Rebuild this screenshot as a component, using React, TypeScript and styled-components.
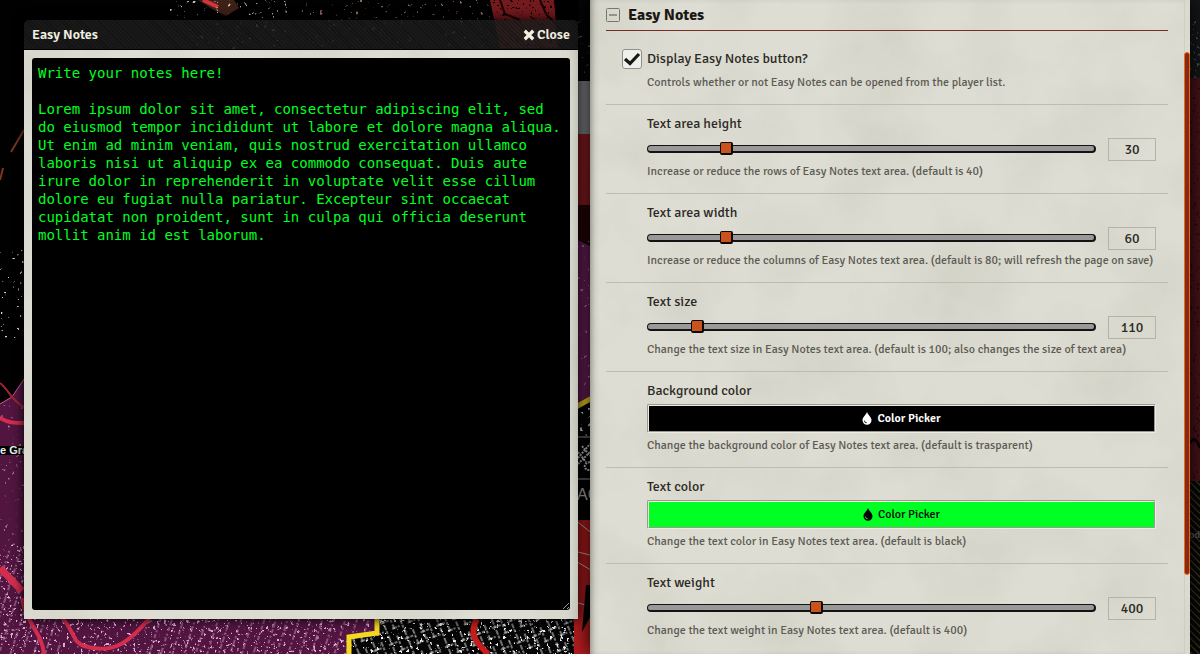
import React, { useState } from "react";
import styled, { createGlobalStyle } from "styled-components";

const GlobalStyle = createGlobalStyle`
  *, *::before, *::after { box-sizing: border-box; }
  html, body { margin: 0; background: #000; }
  body {
    font-family: Signika, "Open Sans", "Noto Sans", sans-serif;
    font-size: 14px;
    font-weight: 400;
    color: #191813;
  }
`;

const Desktop = styled.main`
  position: relative;
  display: grid;
  grid-template-columns: minmax(0, 554fr) minmax(0, 600fr);
  column-gap: 12px;
  align-items: start;
  min-height: 100vh;
  padding: 0 10px 0 24px;
  overflow: hidden;
`;

const MapCanvas = styled.svg`
  position: absolute;
  inset: 0;
  width: 100%;
  height: 100%;
`;

const PaperCanvas = styled.svg`
  position: absolute;
  inset: 0;
  width: 100%;
  height: 100%;
`;

const NotesWindow = styled.section`
  position: relative;
  margin-top: 20px;
  border-radius: 5px 5px 0 0;
  box-shadow: 0 0 12px #000;
`;

const TitleBar = styled.header`
  display: flex;
  align-items: center;
  justify-content: space-between;
  height: 30px;
  padding: 0 8px;
  border-bottom: 1px solid #000;
  border-radius: 5px 5px 0 0;
  background:
    repeating-linear-gradient(45deg, #0004 0 1px, transparent 1px 3px),
    rgba(29, 29, 29, 0.86);
  color: #f0f0e0;
`;

const WindowTitle = styled.h1`
  margin: 0;
  font-size: 14px;
  line-height: 20px;
  font-weight: 600;
`;

const CloseButton = styled.button`
  display: flex;
  align-items: center;
  gap: 2px;
  padding: 0;
  border: 0;
  background: none;
  color: inherit;
  font: inherit;
  line-height: 20px;
  font-weight: 600;
  cursor: pointer;
`;

const WindowBody = styled.div`
  position: relative;
  padding: 8px 8px 9px;
  background: #dad9cd;
`;

const NotesArea = styled.textarea`
  position: relative;
  display: block;
  width: 100%;
  padding: 6px;
  border: 0;
  border-radius: 3px;
  outline: 0;
  background: #000;
  color: #00ff22;
  font-family: Consolas, "DejaVu Sans Mono", monospace;
  font-size: 14px;
  line-height: 18px;
  resize: both;
`;

const SettingsPanel = styled.section`
  position: relative;
  display: flex;
  min-height: 100vh;
  background: #dad9cd;
  box-shadow: 0 0 20px #000;
`;

const SettingsList = styled.form`
  position: relative;
  flex: 1;
  min-width: 0;
  padding: 0 16px;
  box-shadow: inset 6px 0 8px -6px #66665a;
`;

const SectionHeader = styled.h2`
  display: flex;
  align-items: center;
  gap: 8px;
  height: 31px;
  margin: 0;
  border-bottom: 1px solid #782e22;
  font-size: 16px;
  line-height: 32px;
  font-weight: 700;
`;

const Setting = styled.div<{ $first?: boolean; $last?: boolean }>`
  padding: ${(p) => (p.$first ? 18 : 9)}px 12px 12px 41px;
  border-bottom: ${(p) => (p.$last ? "0" : "1px solid #bdbcb0")};
`;

const Label = styled.label`
  display: block;
  line-height: 20px;
  color: #2b2a25;
`;

const Hint = styled.p`
  margin: 2px 0 0;
  font-size: 12px;
  line-height: 18px;
  color: #5c5b54;
  white-space: nowrap;
`;

const CheckRow = styled.div`
  display: flex;
  align-items: center;
  gap: 5px;
  margin: 0 0 5px -25px;
`;

const CheckBoxFrame = styled.span`
  display: grid;
  width: 20px;
  height: 20px;

  > * { grid-area: 1 / 1; }
  > svg { position: relative; pointer-events: none; }
`;

const CheckBox = styled.input`
  appearance: none;
  width: 20px;
  height: 20px;
  margin: 0;
  border: 1px solid #918f8c;
  border-radius: 3px;
  background: #efefec;

  &:not(:checked) + svg { visibility: hidden; }
`;

const SliderRow = styled.div`
  display: flex;
  align-items: center;
  gap: 12px;
  height: 24px;
  margin-top: 3px;
`;

const Slider = styled.input`
  appearance: none;
  flex: 1;
  min-width: 0;
  height: 8px;
  margin: 0;
  border: solid #131311;
  border-width: 1px 2px 2px 1px;
  border-radius: 4px;
  background: #999;

  &::-webkit-slider-thumb {
    appearance: none;
    width: 13px;
    height: 13px;
    border: solid #0c0a08;
    border-width: 1px 2px 2px 1px;
    border-radius: 2px;
    background: #c9531a;
  }
`;

const ValueBox = styled.input`
  width: 48px;
  height: 23px;
  padding: 0;
  border: 1px solid #b5b3a4;
  background: none;
  color: #2b2a25;
  font: inherit;
  text-align: center;
`;

const PickerButton = styled.button<{ $fill: string; $ink: string; $strong?: boolean }>`
  display: flex;
  align-items: center;
  justify-content: center;
  gap: 5px;
  width: 100%;
  height: 29px;
  margin: 3px 0 4px;
  padding: 0;
  border: 2px groove #eeede0;
  border-radius: 2px;
  background: ${(p) => p.$fill};
  color: ${(p) => p.$ink};
  font: inherit;
  font-size: 12px;
  font-weight: ${(p) => (p.$strong ? 600 : 400)};
  cursor: pointer;
`;

const ScrollTrack = styled.div`
  position: relative;
  width: 6px;
  padding-top: 52px;
  border-left: 1px solid #cfcec2;
`;

const ScrollThumb = styled.div`
  width: 6px;
  height: 80vh;
  margin-left: -1px;
  border: 1px solid #ff6400;
  border-radius: 3px;
  background: #782e22;
`;

const Paper = ({ id }: { id: string }) => (
  <PaperCanvas aria-hidden="true">
    <filter id={id} x="0" y="0" width="100%" height="100%">
      <feTurbulence type="fractalNoise" baseFrequency="0.012" numOctaves={6} seed={4} />
      <feColorMatrix values="0 0 0 0 0.45  0 0 0 0 0.45  0 0 0 0 0.38  0.9 0 0 0 -0.34" />
    </filter>
    <rect width="100%" height="100%" fill="#deddd3" />
    <rect width="100%" height="100%" filter={`url(#${id})`} opacity="0.5" />
  </PaperCanvas>
);

const Speckle = ({ id, freq, seed, cut }: { id: string; freq: string; seed: number; cut: number }) => (
  <filter id={id} x="0" y="0" width="100%" height="100%">
    <feTurbulence type="fractalNoise" baseFrequency={freq} numOctaves={3} seed={seed} result="n" />
    <feColorMatrix in="n" values={`0 0 0 0 1  0 0 0 0 1  0 0 0 0 1  14 0 0 0 ${cut}`} result="m" />
    <feComposite in="SourceGraphic" in2="m" operator="in" />
  </filter>
);

const CityMap = () => (
  <MapCanvas viewBox="0 0 1200 654" preserveAspectRatio="none" aria-hidden="true">
    <defs>
      <Speckle id="fine" freq="0.3" seed={3} cut={-9.2} />
      <Speckle id="sparse" freq="0.25" seed={9} cut={-9.8} />
      <pattern id="streets" width="17" height="23" patternUnits="userSpaceOnUse" patternTransform="rotate(-22)">
        <path d="M3 0V23M11 2V19M0 8H9M9 17H17" stroke="#ddd" strokeWidth="1" strokeDasharray="5 1 3 2" fill="none" />
      </pattern>
      <pattern id="lanes" width="11" height="30" patternUnits="userSpaceOnUse" patternTransform="rotate(18)">
        <path d="M3 0V30" stroke="#c78dba" strokeWidth="1" strokeDasharray="2 2 4 3" />
      </pattern>
      <pattern id="stripes" width="5" height="5" patternUnits="userSpaceOnUse" patternTransform="rotate(-45)">
        <path d="M0 0V5" stroke="#45411c" strokeWidth="2" />
      </pattern>
    </defs>
    <rect width="1200" height="654" fill="#020101" />

    {/* northern coast */}
    <path d="M198 0H234L239 8L226 16L212 9Z" fill="#3d2016" />
    <path d="M203 0L218 7" stroke="#d8333c" strokeWidth="4" />
    <path d="M490 0H554L558 48H500Z" fill="#74191d" />
    <path d="M500 0L505 14L520 20M540 0L546 14L556 24" stroke="#180405" strokeWidth="2" fill="none" />
    <path d="M162 0H290V56H200Z" fill="#bdbdbd" filter="url(#sparse)" />
    <rect x="300" width="190" height="50" fill="#8d6a62" filter="url(#sparse)" />
    <rect x="480" width="100" height="50" fill="#000" filter="url(#fine)" />
    <path d="M24 130L11 152M3 168L0 180" stroke="#7d3421" strokeWidth="2" />
    <rect y="250" width="24" height="90" fill="#d5d5d5" filter="url(#sparse)" />

    {/* southern district */}
    <path d="M0 404L12 397L24 379L60 360H590V654H0Z" fill="#511540" />
    <path d="M0 404L12 397L24 379" stroke="#d855a8" fill="none" />
    <rect y="405" width="380" height="249" fill="#a56d98" filter="url(#sparse)" />
    <rect y="545" width="380" height="109" fill="#e3afd7" filter="url(#fine)" />
    <rect x="145" y="612" width="230" height="42" fill="url(#lanes)" />
    <rect y="550" width="60" height="104" fill="url(#lanes)" />
    <g stroke="#d42d4e" fill="none">
      <path d="M0 383C8 388 10 400 24 407" strokeWidth="2" stroke="#9c2530" />
      <path d="M0 418C8 423 15 423 24 423" strokeWidth="4" />
      <path d="M0 568L22 591" strokeWidth="7" />
      <path d="M22 598C26 624 42 632 44 654" strokeWidth="4" />
      <path d="M60 615C76 633 72 642 84 646C114 655 130 642 152 615" strokeWidth="4" />
    </g>
    <path d="M380 610L376 633L349 636V654H590V610Z" fill="#050505" />
    <path d="M380 610H590V654H350V637L376 634Z" fill="url(#streets)" />
    <path d="M380 610H590V654H350V637L376 634Z" fill="#eee" filter="url(#fine)" />
    <path d="M377 615V633L349 637V654" stroke="#f3d723" strokeWidth="5" fill="none" />
    <path d="M477 619C467 636 480 646 488 654" stroke="#c51d1b" strokeWidth="6" fill="none" />
    <rect y="446" width="40" height="9" fill="#000" />
    <text x="0" y="454" fill="#eee" fontFamily="Liberation Sans, sans-serif" fontWeight="700" fontSize="11">e Gra</text>

    {/* channel between the windows */}
    <rect x="578" width="12" height="80" fill="#050505" />
    <rect x="578" y="20" width="12" height="60" fill="#777" filter="url(#sparse)" />
    <rect x="574" y="81" width="20" height="53" fill="#85858a" />
    <rect x="574" y="134" width="20" height="74" fill="#8c1c22" />
    <path d="M574 205H594V246L574 238Z" fill="#250507" />
    <path d="M574 238L594 248V404H574Z" fill="#6b1f59" />
    <rect x="574" y="240" width="20" height="155" fill="#b37ca7" filter="url(#sparse)" />
    <path d="M574 408L594 397V520H574Z" fill="#040404" />
    <path d="M574 408L594 397" stroke="#f3d723" strokeWidth="5" />
    <rect x="574" y="408" width="20" height="30" fill="#ddd" filter="url(#sparse)" />
    <path d="M574 437H594M574 479H594" stroke="#aaa" />
    <path d="M578 458L590 444M578 464L590 452M578 452L586 462M582 446L590 456M590 462C582 463 584 471 590 470" stroke="#ccc" strokeWidth="2" fill="none" strokeDasharray="2 1" />
    <text x="577" y="500" fill="#bbb" fontFamily="Liberation Sans, sans-serif" fontSize="16">AC</text>
    <path d="M574 520H594V654H574Z" fill="#b51c1e" />
    <path d="M574 519L594 535M574 551L594 556M574 560L594 572M574 602L594 607" stroke="#ccbaba" strokeWidth="1" />
    <path d="M586 585H594V610L582 632Z" fill="#050505" />

    {/* dimmed edge behind the settings */}
    <rect x="1180" width="20" height="82" fill="#151617" />
    <rect x="1180" y="20" width="20" height="60" fill="#555658" filter="url(#fine)" />
    <rect x="1180" y="78" width="20" height="404" fill="#4a1318" />
    <rect x="1180" y="78" width="20" height="404" fill="#240d0f" filter="url(#fine)" />
    <path d="M1190 443C1194 436 1197 440 1200 448" stroke="#0c0505" strokeWidth="3" fill="none" />
    <rect x="1180" y="481" width="20" height="173" fill="#080808" />
    <rect x="1180" y="481" width="20" height="173" fill="url(#stripes)" />
    <text x="1189" y="538" fill="#5c5d61" fontFamily="Liberation Sans, sans-serif" fontWeight="700" fontSize="9">od</text>
  </MapCanvas>
);

const CrossIcon = () => (
  <svg width="12" height="12" viewBox="0 0 11 11" aria-hidden="true">
    <path d="M1.6 1.6L9.4 9.4M9.4 1.6L1.6 9.4" stroke="currentColor" strokeWidth="3" />
  </svg>
);

const CollapseIcon = () => (
  <svg width="14" height="14" viewBox="0 0 14 14" fill="none" stroke="#77766e" aria-hidden="true">
    <rect x="0.5" y="0.5" width="13" height="13" rx="1" />
    <path d="M3 7H11" strokeWidth="1.4" />
  </svg>
);

const CheckIcon = () => (
  <svg width="20" height="20" viewBox="0 0 20 20" aria-hidden="true">
    <path d="M3 10L8 14.5L17 5" fill="none" stroke="#191813" strokeWidth="3.2" />
  </svg>
);

const DropIcon = () => (
  <svg width="10" height="13" viewBox="0 0 10 13" aria-hidden="true">
    <path
      fill="currentColor"
      fillRule="evenodd"
      d="M5 0C5.8 3 9.5 5 9.5 8.3A4.5 4.5 0 0 1 .5 8.3C.5 5 4.2 3 5 0ZM2 8.6C2.1 10.2 3.3 11.2 4.8 11.2V10.4C3.7 10.3 2.9 9.7 2.7 8.6Z"
    />
  </svg>
);

interface RangeProps {
  id: string;
  label: string;
  hint: string;
  min: number;
  max: number;
  initial: number;
  last?: boolean;
}

const RangeSetting = ({ id, label, hint, min, max, initial, last }: RangeProps) => {
  const [value, setValue] = useState(initial);
  return (
    <Setting $last={last}>
      <Label htmlFor={id}>{label}</Label>
      <SliderRow>
        <Slider id={id} type="range" min={min} max={max} value={value} onChange={(e) => setValue(Number(e.target.value))} />
        <ValueBox
          type="text"
          aria-label={`${label} value`}
          value={value}
          onChange={(e) => setValue(Number(e.target.value) || min)}
        />
      </SliderRow>
      <Hint>{hint}</Hint>
    </Setting>
  );
};

interface ColorProps {
  id: string;
  label: string;
  hint: string;
  fill: string;
  ink: string;
  strong?: boolean;
}

const ColorSetting = ({ id, label, hint, fill, ink, strong }: ColorProps) => (
  <Setting>
    <Label htmlFor={id}>{label}</Label>
    <PickerButton id={id} type="button" $fill={fill} $ink={ink} $strong={strong}>
      <DropIcon />
      Color Picker
    </PickerButton>
    <Hint>{hint}</Hint>
  </Setting>
);

const NOTES = `Write your notes here!

Lorem ipsum dolor sit amet, consectetur adipiscing elit, sed do eiusmod tempor incididunt ut labore et dolore magna aliqua. Ut enim ad minim veniam, quis nostrud exercitation ullamco laboris nisi ut aliquip ex ea commodo consequat. Duis aute irure dolor in reprehenderit in voluptate velit esse cillum dolore eu fugiat nulla pariatur. Excepteur sint occaecat cupidatat non proident, sunt in culpa qui officia deserunt mollit anim id est laborum.`;

export default function App() {
  return (
    <>
      <GlobalStyle />
      <Desktop>
        <CityMap />
        <NotesWindow>
          <TitleBar>
            <WindowTitle>Easy Notes</WindowTitle>
            <CloseButton type="button">
              <CrossIcon />
              Close
            </CloseButton>
          </TitleBar>
          <WindowBody>
            <Paper id="paper-notes" />
            <NotesArea rows={30} aria-label="Notes" spellCheck={false} defaultValue={NOTES} />
          </WindowBody>
        </NotesWindow>
        <SettingsPanel>
          <Paper id="paper-settings" />
          <SettingsList>
            <SectionHeader>
              <CollapseIcon />
              Easy Notes
            </SectionHeader>
            <Setting $first>
              <CheckRow>
                <CheckBoxFrame>
                  <CheckBox id="display" type="checkbox" defaultChecked />
                  <CheckIcon />
                </CheckBoxFrame>
                <Label htmlFor="display">Display Easy Notes button?</Label>
              </CheckRow>
              <Hint>Controls whether or not Easy Notes can be opened from the player list.</Hint>
            </Setting>
            <RangeSetting id="height" label="Text area height" hint="Increase or reduce the rows of Easy Notes text area. (default is 40)" min={20} max={80} initial={30} />
            <RangeSetting id="width" label="Text area width" hint="Increase or reduce the columns of Easy Notes text area. (default is 80; will refresh the page on save)" min={40} max={160} initial={60} />
            <RangeSetting id="size" label="Text size" hint="Change the text size in Easy Notes text area. (default is 100; also changes the size of text area)" min={100} max={200} initial={110} />
            <ColorSetting id="background" label="Background color" hint="Change the background color of Easy Notes text area. (default is trasparent)" fill="#000" ink="#fff" strong />
            <ColorSetting id="color" label="Text color" hint="Change the text color in Easy Notes text area. (default is black)" fill="#00ff22" ink="#000" />
            <RangeSetting id="weight" label="Text weight" hint="Change the text weight in Easy Notes text area. (default is 400)" min={100} max={900} initial={400} last />
          </SettingsList>
          <ScrollTrack>
            <ScrollThumb />
          </ScrollTrack>
        </SettingsPanel>
      </Desktop>
    </>
  );
}
